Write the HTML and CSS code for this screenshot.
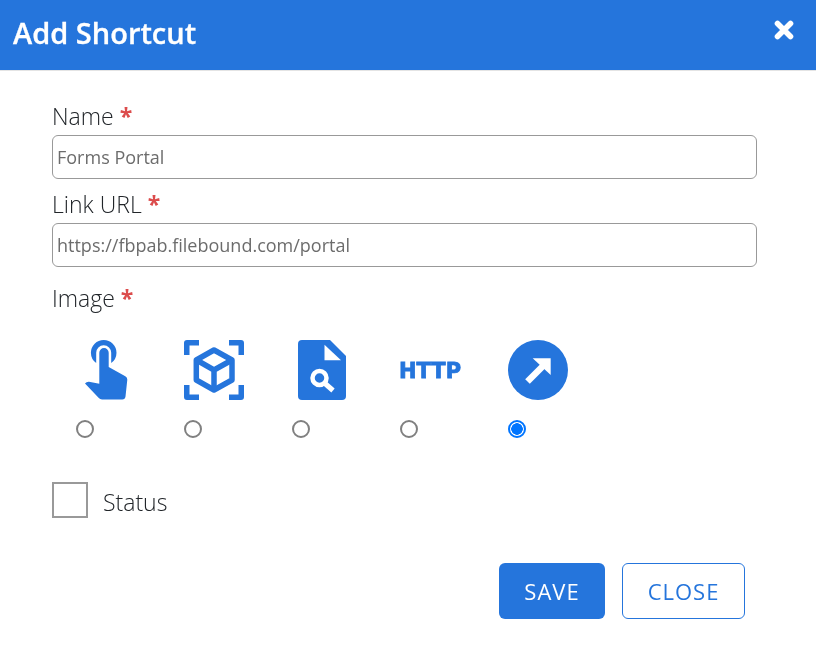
FILE: index.html
```html
<!DOCTYPE html>
<html lang="en">
<head>
    <meta charset="UTF-8">
    <title>Add Shortcut</title>
    <link rel="stylesheet" href="styles.css">
</head>
<body>

<div class="header">
    <h1>Add Shortcut</h1>
    <svg class="close-x" width="20" height="20" viewBox="0 0 20 20">
        <path d="M3.500 3.500L16.500 16.500M16.500 3.500L3.500 16.500" stroke="#fff" stroke-width="5.600" stroke-linecap="round"/>
    </svg>
</div>

<form class="form">
    <label class="field-label" for="name">Name <span class="req">*</span></label>
    <input type="text" id="name" value="Forms Portal">

    <label class="field-label" for="url">Link URL <span class="req">*</span></label>
    <input type="text" id="url" value="https://fbpab.filebound.com/portal">

    <div class="field-label image-label">Image <span class="req">*</span></div>
    <div class="images">
        <label class="image-option">
            <svg width="60" height="60" viewBox="0 0 60 60">
                <path class="fill" d="M27.700 0a12.800 12.800 0 0 1 12.800 12.800a12.800 12.800 0 0 1-5.300 10.300v-10.400a7.500 7.500 0 1 0-15 0v10.400a12.800 12.800 0 0 1-5.300-10.300a12.800 12.800 0 0 1 12.800-12.800z"/>
                <path class="fill" d="M23.300 12.700a4.700 4.700 0 0 1 9.400 0V27l16.600 9.200q2.200 1.300 2 3.600l-1.800 16.700q-.4 3-3.200 3H26q-2 0-3.200-1.400L9 43.500q1.500-2 4-1.800l10.300 2z"/>
            </svg>
            <input type="radio" name="image">
        </label>
        <label class="image-option">
            <svg width="60" height="60" viewBox="0 0 60 60">
                <path class="fill" d="M3 0H15V5.500H5.500V15H0V3Q0 0 3 0zM45 0H57Q60 0 60 3V15H54.500V5.500H45zM0 45H5.500V54.500H15V60H3Q0 60 0 57zM54.500 45H60V57Q60 60 57 60H45V54.500H54.500z"/>
                <g class="line">
                    <path d="M30 10L48 20V40L30 50L12.300 40V20z"/>
                    <path d="M12.500 20L30 30L48 20M30 30V50"/>
                </g>
            </svg>
            <input type="radio" name="image">
        </label>
        <label class="image-option">
            <svg width="60" height="60" viewBox="0 0 60 60">
                <path class="fill" d="M10 0H38L54 16V56Q54 60 50 60H10Q6 60 6 56V4Q6 0 10 0z"/>
                <path d="M32.500 4.700L49 20.300H32.500z" fill="#fff"/>
                <circle cx="27.500" cy="38" r="7" fill="none" stroke="#fff" stroke-width="4.500"/>
                <path d="M33 43.500L41 50.500" stroke="#fff" stroke-width="5"/>
            </svg>
            <input type="radio" name="image">
        </label>
        <label class="image-option">
            <svg width="60" height="60" viewBox="0 0 60 60">
                <text class="http-text" x="-1" y="38" textLength="62" lengthAdjust="spacingAndGlyphs">HTTP</text>
            </svg>
            <input type="radio" name="image">
        </label>
        <label class="image-option">
            <svg width="60" height="60" viewBox="0 0 60 60">
                <circle class="fill" cx="30" cy="30" r="30"/>
                <path d="M19.500 41.500L36 25" stroke="#fff" stroke-width="6.500"/>
                <path d="M24.700 18.300H42.700V35z" fill="#fff"/>
            </svg>
            <input type="radio" name="image" checked>
        </label>
    </div>

    <label class="status">
        <span class="box"></span>
        <span class="status-text">Status</span>
    </label>

    <div class="buttons">
        <button type="button" class="btn-save">SAVE</button>
        <button type="button" class="btn-close">CLOSE</button>
    </div>
</form>

</body>
</html>
```

FILE: styles.css
```css
body {
    margin: 0;
    font-family: "Open Sans", Arial, sans-serif;
    background-color: #fff;
    color: #212529;
}
.header {
    height: 70px;
    background-color: #2575dc;
    border-bottom: 1px solid #e4e4e4;
    padding: 0 22px 0 13px;
    display: flex;
    align-items: center;
    justify-content: space-between;
}
.header h1 {
    margin: -5px 0 0;
    font-size: 29px;
    font-weight: 600;
    color: #fff;
    -webkit-text-stroke: .3px #fff;
    will-change: transform;
}
.close-x {
    align-self: flex-start;
    margin-top: 20px;
}
.form {
    padding: 29px 59px 0 52px;
    will-change: transform;
}
.field-label {
    display: block;
    font-size: 23px;
    font-weight: 300;
    line-height: 32px;
    height: 35px;
}
.req {
    color: #dc4c4c;
    font-weight: 700;
}
input[type="text"] {
    display: block;
    box-sizing: border-box;
    width: 100%;
    height: 44px;
    margin-bottom: 9px;
    padding: 0 4px;
    border: 1px solid #999;
    border-radius: 6px;
    font-family: inherit;
    font-size: 18px;
    color: #6c6c6c;
}
.image-label {
    margin-top: 15px;
    height: 27px;
}
.images {
    display: flex;
    padding: 31px 0 0 24px;
}
.image-option {
    width: 108px;
    display: block;
}
.image-option svg {
    display: block;
    overflow: visible;
}
.image-option input {
    appearance: none;
    display: block;
    box-sizing: border-box;
    width: 18px;
    height: 18px;
    margin: 20px 0 0;
    border: 2px solid #808080;
    border-radius: 50%;
}
.image-option input:checked {
    border-color: #0075ff;
    background: radial-gradient(circle, #0075ff 0, #0075ff 5.500px, #fff 6px);
}
.fill {
    fill: #2575dc;
}
.line {
    fill: none;
    stroke: #2575dc;
    stroke-width: 5.500;
    stroke-linejoin: round;
}
.http-text {
    font-family: "DejaVu Sans", sans-serif;
    font-weight: 700;
    font-size: 22px;
    fill: #2575dc;
    stroke: #2575dc;
    stroke-width: .8;
}
.status {
    display: flex;
    align-items: center;
    gap: 15px;
    margin-top: 44px;
    font-size: 23px;
    font-weight: 300;
}
.status-text {
    padding-top: 3px;
}
.box {
    box-sizing: border-box;
    width: 36px;
    height: 36px;
    border: 2px solid #999;
}
.buttons {
    display: flex;
    justify-content: flex-end;
    gap: 17px;
    margin-top: 45px;
    padding-right: 12px;
}
.buttons button {
    box-sizing: border-box;
    height: 56px;
    border-radius: 6px;
    font-family: inherit;
    font-size: 22px;
    letter-spacing: 1px;
    cursor: pointer;
}
.btn-save {
    width: 106px;
    background-color: #2575dc;
    border: none;
    color: #fff;
}
.btn-close {
    width: 123px;
    background-color: #fff;
    border: 1px solid #2575dc;
    color: #2575dc;
}
```
